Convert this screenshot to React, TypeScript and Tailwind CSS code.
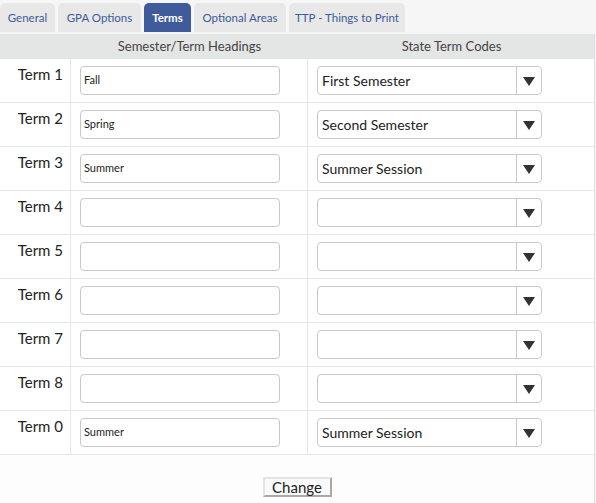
import React from 'react';

const tabs = [
  { name: 'General', w: 'w-[55px]' },
  { name: 'GPA Options', w: 'w-[83px]' },
  { name: 'Terms', w: 'w-[47px]' },
  { name: 'Optional Areas', w: 'w-[92px]' },
  { name: 'TTP - Things to Print', w: 'w-[116px]' },
];

const rows = [
  { label: 'Term 1', heading: 'Fall', code: 'First Semester' },
  { label: 'Term 2', heading: 'Spring', code: 'Second Semester' },
  { label: 'Term 3', heading: 'Summer', code: 'Summer Session' },
  { label: 'Term 4', heading: '', code: '' },
  { label: 'Term 5', heading: '', code: '' },
  { label: 'Term 6', heading: '', code: '' },
  { label: 'Term 7', heading: '', code: '' },
  { label: 'Term 8', heading: '', code: '' },
  { label: 'Term 0', heading: 'Summer', code: 'Summer Session' },
];

const App = () => {
  return (
    <div className="w-[596px] h-[503px] bg-[#f6f6f6] font-['Lato',sans-serif] overflow-hidden">
      {/* tabs */}
      <div className="flex gap-[3px] pt-[3px] h-[34px]">
        {tabs.map((t) => (
          <div
            key={t.name}
            className={
              t.name === 'Terms'
                ? `${t.w} h-[29px] flex items-center justify-center whitespace-nowrap rounded-t-[5px] bg-[#3f5b9b] text-white text-[11.5px] font-bold`
                : `${t.w} h-[29px] flex items-center justify-center whitespace-nowrap rounded-t-[5px] bg-[#e8e8e8] text-[#3d5a98] text-[11.5px]`
            }
          >
            {t.name}
          </div>
        ))}
      </div>

      <div className="w-[595px] border-r border-[#dcdfe0] bg-white">
        {/* header */}
        <div className="grid grid-cols-[71px_237px_287px] h-[25px] bg-[#e4e5e5] text-[13px] text-[#444] items-center">
          <div />
          <div className="text-center">Semester/Term Headings</div>
          <div className="text-center">State Term Codes</div>
        </div>

        {rows.map((r) => (
          <div key={r.label} className="grid grid-cols-[71px_237px_287px] h-[44px] border-b border-[#e2e7e9]">
            <div className="border-r border-[#e2e7e9] text-right pr-[7px] pt-[6px] text-[15px] text-[#222] leading-[18px]">
              {r.label}
            </div>
            <div className="border-r border-[#e2e7e9] pl-[9px] pt-[7px]">
              <div className="w-[200px] h-[29px] border border-[#c9c9c9] rounded-[4px] bg-white flex items-center pl-[3px] text-[11px] text-[#222]">
                {r.heading}
              </div>
            </div>
            <div className="pl-[9px] pt-[7px]">
              <div className="w-[225px] h-[29px] border border-[#c9c9c9] rounded-[4px] bg-white flex items-center">
                <div className="flex-1 pl-[4px] text-[14px] text-[#222]">{r.code}</div>
                <div className="w-[25px] h-full border-l border-[#c9c9c9] flex items-center justify-center">
                  <svg width="12" height="10" viewBox="0 0 12 10">
                    <path d="M0 1 L12 1 L6 10 Z" fill="#333" />
                  </svg>
                </div>
              </div>
            </div>
          </div>
        ))}

        {/* footer */}
        <div className="h-[48px] bg-[#fdfdfd] flex justify-center pt-[22px]">
          <button className="w-[69px] h-[20px] border-2 border-[#a8a8a8] border-t-[#e4e4e4] border-l-[#e4e4e4] bg-[#fafafa] text-[15px] text-[#222] leading-none font-['Lato',sans-serif]">
            Change
          </button>
        </div>
      </div>
    </div>
  );
};

export default App;
